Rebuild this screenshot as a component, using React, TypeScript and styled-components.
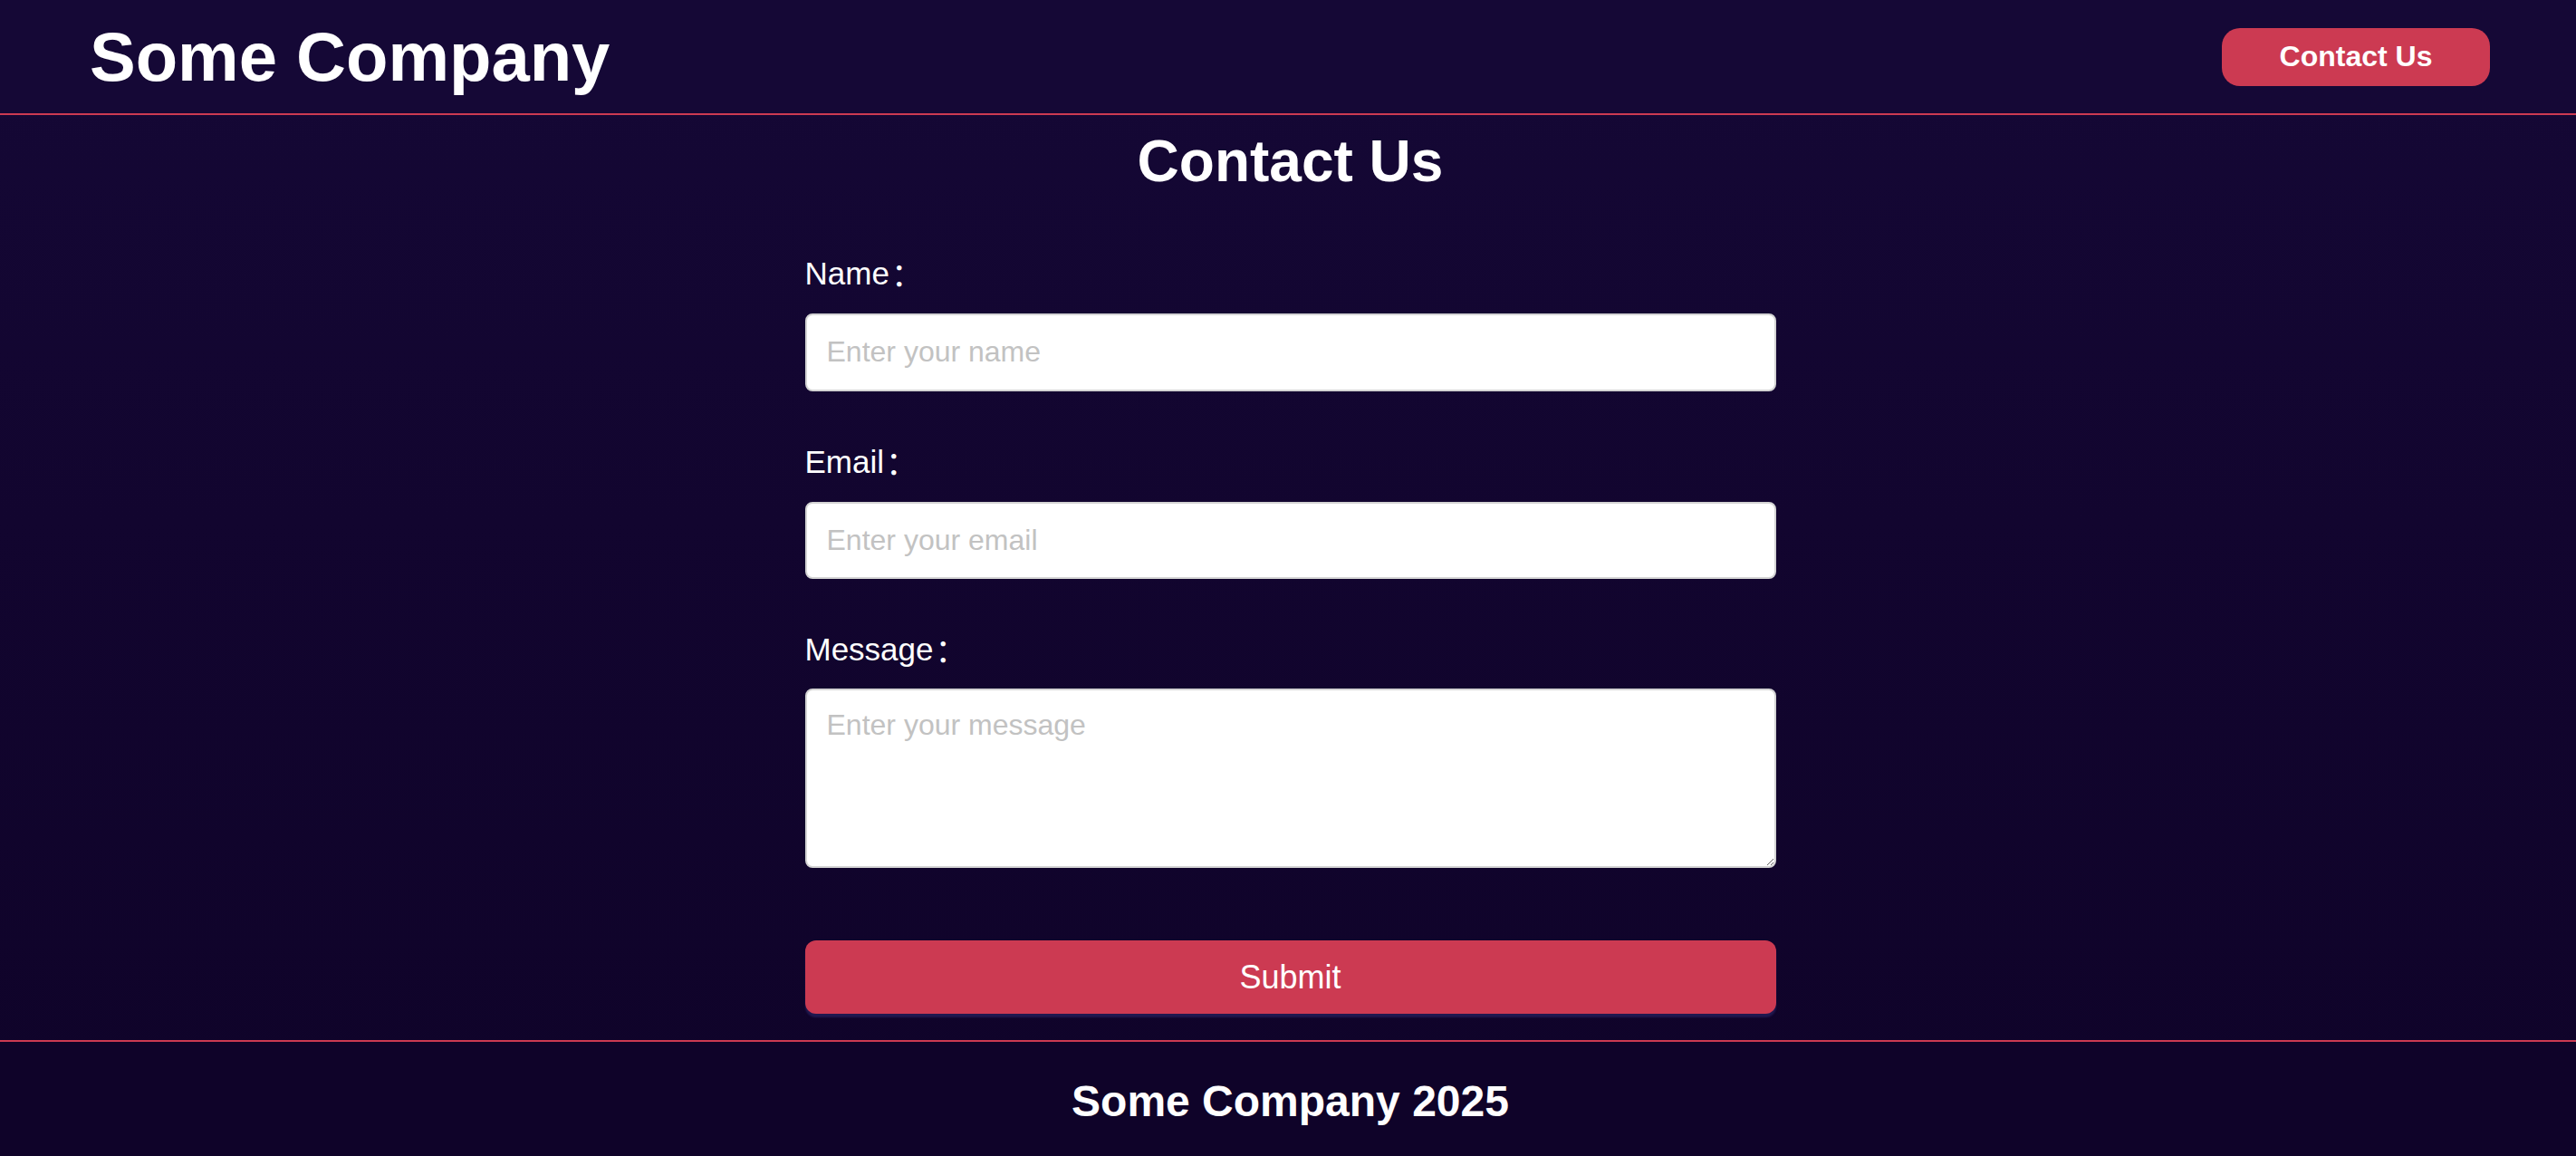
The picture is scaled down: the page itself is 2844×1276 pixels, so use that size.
import React from "react";
import styled, { createGlobalStyle } from "styled-components";

const GlobalStyle = createGlobalStyle`
  html, body {
    margin: 0;
    padding: 0;
    background: #12052f;
  }
  body {
    font-family: "Liberation Sans", Arial, "Noto Sans CJK SC", sans-serif;
    color: #ffffff;
  }
  * { box-sizing: border-box; }
`;

const Page = styled.div`
  min-height: 100vh;
  display: flex;
  flex-direction: column;
  background: linear-gradient(180deg, #150836 0%, #12052f 45%, #0f0329 100%);
`;

const Header = styled.header`
  height: 127px;
  display: flex;
  align-items: center;
  justify-content: space-between;
  padding: 0 95px 0 99px;
  background: #150836;
  border-bottom: 2px solid #cc3a52;
`;

const Brand = styled.h1`
  margin: 0;
  font-size: 76px;
  font-weight: 700;
  line-height: normal;
  color: #ffffff;
`;

const NavButton = styled.button`
  width: 296px;
  height: 64px;
  border: none;
  border-radius: 20px;
  background: #cc3a52;
  color: #ffffff;
  font-family: "Liberation Sans", Arial, sans-serif;
  font-size: 32px;
  font-weight: 700;
  cursor: pointer;
`;

const Main = styled.main`
  display: flex;
  flex-direction: column;
  align-items: center;
  padding: 14px 0 29px 5px;
`;

const Title = styled.h2`
  margin: 0 0 66px;
  font-size: 64px;
  font-weight: 700;
  line-height: normal;
  color: #ffffff;
`;

const Form = styled.form`
  width: 1072px;
  display: flex;
  flex-direction: column;
  gap: 57px;
`;

const Field = styled.div<{ $gap?: number }>`
  display: flex;
  flex-direction: column;
  gap: ${(p) => p.$gap ?? 25}px;
`;

const Label = styled.label`
  display: block;
  height: 40px;
  font-size: 35px;
  line-height: 40px;
  color: #ffffff;
  font-family: "Liberation Sans", Arial, "Noto Sans CJK SC", sans-serif;
`;

const Colon = styled.span`
  font-family: "Noto Sans CJK SC", sans-serif;
  vertical-align: -2px;
  margin-left: 2px;
`;

const controlBase = `
  width: 100%;
  border: 2px solid #d4d4d4;
  border-radius: 8px;
  background: #ffffff;
  color: #222222;
  font-family: "Liberation Sans", Arial, sans-serif;
  font-size: 32px;
  outline: none;
  &::placeholder { color: #c2c2c2; }
`;

const Input = styled.input`
  ${controlBase}
  height: 85.5px;
  padding: 0 22px;
`;

const TextArea = styled.textarea`
  ${controlBase}
  display: block;
  height: 198px;
  padding: 20px 22px;
  line-height: normal;
`;

const Submit = styled.button`
  margin-top: 23px;
  height: 81px;
  width: 100%;
  border: none;
  border-radius: 12px;
  background: #cc3a52;
  color: #ffffff;
  font-family: "Liberation Sans", Arial, sans-serif;
  font-size: 36px;
  box-shadow: 0 4px 2px rgba(40, 36, 100, 0.65);
  cursor: pointer;
`;

const Footer = styled.footer`
  flex: 1;
  display: flex;
  justify-content: center;
  align-items: flex-start;
  padding: 38px 0 32px 5px;
  background: #0f0329;
  border-top: 2px solid #cc3a52;
`;

const FooterText = styled.p`
  margin: 0;
  font-size: 48px;
  font-weight: 700;
  line-height: normal;
  color: #ffffff;
`;

export default function App() {
  return (
    <>
      <GlobalStyle />
      <Page>
        <Header>
          <Brand>Some Company</Brand>
          <NavButton type="button">Contact Us</NavButton>
        </Header>
        <Main>
          <Title>Contact Us</Title>
          <Form onSubmit={(e) => e.preventDefault()}>
            <Field>
              <Label htmlFor="name">
                Name<Colon>：</Colon>
              </Label>
              <Input id="name" type="text" placeholder="Enter your name" />
            </Field>
            <Field>
              <Label htmlFor="email">
                Email<Colon>：</Colon>
              </Label>
              <Input id="email" type="email" placeholder="Enter your email" />
            </Field>
            <Field $gap={24}>
              <Label htmlFor="message">
                Message<Colon>：</Colon>
              </Label>
              <TextArea id="message" placeholder="Enter your message" />
            </Field>
            <Submit type="submit">Submit</Submit>
          </Form>
        </Main>
        <Footer>
          <FooterText>Some Company 2025</FooterText>
        </Footer>
      </Page>
    </>
  );
}
